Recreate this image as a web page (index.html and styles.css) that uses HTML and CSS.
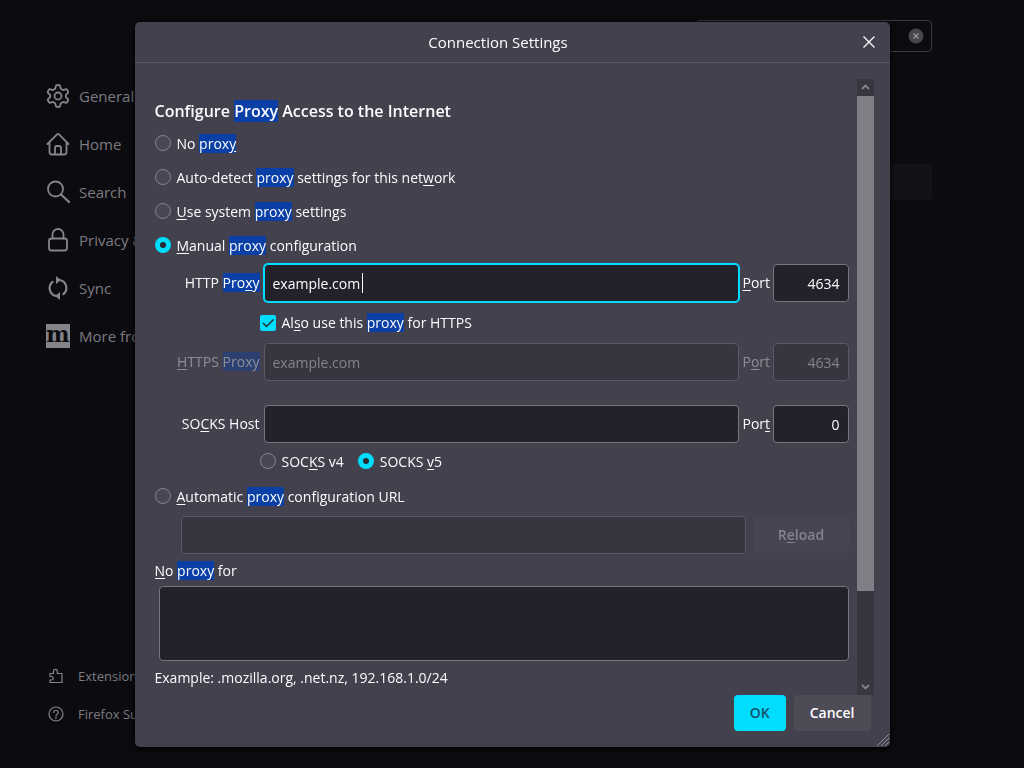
FILE: index.html
```html
<!DOCTYPE html>
<html lang="en">
<head>
  <meta charset="UTF-8">
  <meta name="viewport" content="width=device-width, initial-scale=1.0">
  <title>Connection Settings</title>
  <link rel="stylesheet" href="styles.css">
</head>
<body>

  <!-- Settings page behind the dialog -->
  <div class="page">
    <nav class="sidebar">
      <ul class="categories">
        <li><a href="#general">
          <svg class="icon" viewBox="0 0 24 24"><path d="M10 1.500q2-1 4 0l.8 3.300 2.200 1.300 3.300-1q1.800 1.300 2 3.500l-2.500 2.300v2.200l2.500 2.300q-.2 2.200-2 3.500l-3.300-1-2.200 1.300-.8 3.300q-2 1-4 0l-.8-3.300L7 17.900l-3.300 1q-1.800-1.300-2-3.500l2.500-2.300v-2.200L1.700 8.600q.2-2.200 2-3.500l3.300 1 2.200-1.300z"/><circle cx="12" cy="12" r="3.500"/></svg>
          General</a></li>
        <li><a href="#home">
          <svg class="icon" viewBox="0 0 24 24"><path d="M1.500 12 11 2.400q1-1 2 0L22.500 12M3.500 10.500V20q0 2.500 2.500 2.500h12q2.500 0 2.500-2.500v-9.500M9 22v-6q0-2 2-2h2q2 0 2 2v6"/></svg>
          Home</a></li>
        <li><a href="#search">
          <svg class="icon" viewBox="0 0 24 24"><circle cx="9.500" cy="9" r="7.500"/><path d="m15 14.500 8 7.500" stroke-width="2.200"/></svg>
          Search</a></li>
        <li><a href="#privacy">
          <svg class="icon" viewBox="0 0 24 24"><rect x="3" y="10.500" width="18" height="12" rx="2.500"/><path d="M6.500 10.500V6.500a5.500 5.500 0 0 1 11 0v4"/></svg>
          Privacy &amp; Security</a></li>
        <li><a href="#sync">
          <svg class="icon" viewBox="0 0 24 24"><path d="M14 4a8.200 8.200 0 0 1 3.500 14.200M10 20A8.200 8.200 0 0 1 6.500 5.800" stroke-width="2.200"/><path class="solid" d="M10 0v8l5-4zM14 24v-8l-5 4z"/></svg>
          Sync</a></li>
        <li><a href="#more">
          <span class="mozilla">m</span>
          More from Mozilla</a></li>
      </ul>
      <ul class="links">
        <li><a href="#extensions">
          <svg class="icon small" viewBox="0 0 16 16"><path d="M2 5.500h3.500V3.200a1.900 1.900 0 0 1 3.800 0v2.300H14v9H2V12h1.500a1.700 1.700 0 0 0 0-3.500H2z"/></svg>
          Extensions &amp; Themes</a></li>
        <li><a href="#support">
          <svg class="icon small" viewBox="0 0 16 16"><circle cx="8" cy="8" r="7"/><path d="M5.800 6.500a2.200 2.200 0 1 1 3.400 1.800Q8 9 8 10M8 11.300v1.200"/></svg>
          Firefox Support</a></li>
      </ul>
    </nav>
    <main class="content">
      <div class="searchbox">
        <button class="clear" aria-label="Clear search">
          <svg viewBox="0 0 16 16"><circle cx="8" cy="8" r="7.500"/><path d="m5.500 5.500 5 5m0-5-5 5"/></svg>
        </button>
      </div>
      <button class="page-button" aria-label="Settings"></button>
    </main>
  </div>

  <!-- Connection dialog -->
  <div class="overlay">
    <form class="dialog" role="dialog" aria-labelledby="dialog-title">
      <header class="titlebar">
        <h1 id="dialog-title">Connection Settings</h1>
        <button type="button" class="close" aria-label="Close">
          <svg viewBox="0 0 12 12"><path d="m.5.5 11 11m0-11-11 11"/></svg>
        </button>
      </header>

      <div class="dialog-body">
        <div class="settings">
          <h2>Configure <mark>Proxy</mark> Access to the Internet</h2>
          <label class="option"><input type="radio" name="mode"><span>No <mark>prox<u>y</u></mark></span></label>
          <label class="option"><input type="radio" name="mode"><span>Auto-detect <mark>proxy</mark> settings for this net<u>w</u>ork</span></label>
          <label class="option"><input type="radio" name="mode"><span><u>U</u>se system <mark>proxy</mark> settings</span></label>
          <label class="option"><input type="radio" name="mode" checked><span><u>M</u>anual <mark>proxy</mark> configuration</span></label>

          <div class="proxy-grid">
            <label class="host-label" for="http">HTTP <mark>Pro<u>x</u>y</mark></label>
            <div class="editing">
              <input class="field" type="text" id="http" value="example.com" autofocus>
              <span class="caret"></span>
            </div>
            <label for="http-port"><u>P</u>ort</label>
            <input class="field port" type="text" id="http-port" value="4634">

            <label class="option share"><input type="checkbox" checked><span>Al<u>s</u>o use this <mark>proxy</mark> for HTTPS</span></label>

            <label class="host-label disabled" for="https"><u>H</u>TTPS <mark>Proxy</mark></label>
            <input class="field" type="text" id="https" value="example.com" disabled>
            <label class="disabled" for="https-port">P<u>o</u>rt</label>
            <input class="field port" type="text" id="https-port" value="4634" disabled>

            <label class="host-label socks" for="socks">SO<u>C</u>KS Host</label>
            <input class="field socks" type="text" id="socks">
            <label class="socks" for="socks-port">Por<u>t</u></label>
            <input class="field port socks" type="text" id="socks-port" value="0">

            <div class="versions">
              <label class="option"><input type="radio" name="socks"><span>SOC<u>K</u>S v4</span></label>
              <label class="option"><input type="radio" name="socks" checked><span>SOCKS <u>v</u>5</span></label>
            </div>
          </div>

          <label class="option"><input type="radio" name="mode"><span><u>A</u>utomatic <mark>proxy</mark> configuration URL</span></label>
          <div class="url-row">
            <input class="field" type="text" aria-label="Automatic proxy configuration URL" disabled>
            <button type="button" class="button" disabled>R<u>e</u>load</button>
          </div>

          <label class="bypass-label" for="bypass"><u>N</u>o <mark>proxy</mark> for</label>
          <textarea class="field bypass" id="bypass"></textarea>
          <p class="example">Example: .mozilla.org, .net.nz, 192.168.1.0/24</p>
        </div>

        <div class="scrollbar" aria-hidden="true">
          <svg class="arrow" viewBox="0 0 17 17"><path d="m5 10 3.500-3.500L12 10"/></svg>
          <div class="track"><div class="thumb"></div></div>
          <svg class="arrow" viewBox="0 0 17 17"><path d="M5 7l3.500 3.500L12 7"/></svg>
        </div>
      </div>

      <footer class="actions">
        <button type="button" class="button primary">OK</button>
        <button type="button" class="button">Cancel</button>
      </footer>
      <svg class="resizer" viewBox="0 0 14 14"><path d="M1 13 13 1M5 13l8-8M9 13l4-4"/></svg>
    </form>
  </div>

</body>
</html>
```
FILE: styles.css
```css
* {
  margin: 0;
  padding: 0;
  box-sizing: border-box;
}

body {
  font-family: "Open Sans", "Noto Sans", sans-serif;
  font-size: 14px;
  line-height: 20px;
  background-color: #0c0b10;
  color: #fbfbfe;
  overflow: hidden;
}

button,
input,
textarea {
  font: inherit;
  color: inherit;
}

button {
  border: none;
}

/* Page behind */
.page {
  display: flex;
  height: 100vh;
}

.sidebar {
  display: flex;
  flex-direction: column;
  justify-content: space-between;
  width: 240px;
  padding: 72px 0 35px 46px;
}

.sidebar ul {
  list-style: none;
}

.sidebar a {
  display: flex;
  align-items: center;
  gap: 9px;
  height: 48px;
  color: #7c7b80;
  font-size: 15px;
  text-decoration: none;
  white-space: nowrap;
}

.sidebar .links a {
  height: 38px;
  gap: 14px;
  padding-left: 2px;
  font-size: 13px;
}

.icon {
  width: 24px;
  height: 24px;
  fill: none;
  stroke: #858489;
  stroke-width: 1.8;
  stroke-linejoin: round;
  stroke-linecap: round;
}

.icon .solid {
  fill: #858489;
  stroke: none;
}

.icon.small {
  width: 16px;
  height: 16px;
  stroke-width: 1.2;
}

.mozilla {
  width: 24px;
  height: 24px;
  background-color: #858489;
  color: #0c0b10;
  font-family: "DejaVu Serif", serif;
  font-size: 22px;
  font-weight: bold;
  line-height: 20px;
  display: flex;
  justify-content: center;
}

.content {
  flex: 1;
  display: flex;
  flex-direction: column;
  align-items: flex-end;
  padding: 20px 92px;
}

.searchbox {
  display: flex;
  align-items: center;
  justify-content: flex-end;
  width: 236px;
  height: 32px;
  padding-right: 7px;
  border: 1px solid #3c3b40;
  border-radius: 4px;
}

.clear {
  width: 16px;
  height: 16px;
  background: none;
}

.clear svg {
  display: block;
  fill: #47464a;
  stroke: #9a999e;
  stroke-width: 1.2;
}

.clear circle {
  stroke: none;
}

.page-button {
  width: 140px;
  height: 36px;
  margin-top: 112px;
  background-color: #131218;
  border-radius: 4px;
}

/* Dialog */
.overlay {
  position: fixed;
  inset: 0;
  display: flex;
  justify-content: center;
  padding: 22px 16px 21px;
}

.dialog {
  position: relative;
  display: flex;
  flex-direction: column;
  width: 100%;
  max-width: 755px;
  background-color: #42414d;
  border-radius: 5px;
  box-shadow: 0 2px 6px #000;
}

.titlebar {
  display: flex;
  align-items: center;
  height: 41px;
  padding: 0 14px 0 0;
  border-bottom: 1px solid #5b5a65;
}

.titlebar h1 {
  flex: 1;
  font-size: 15px;
  font-weight: normal;
  text-align: center;
}

.close {
  width: 14px;
  height: 14px;
  padding: 1px;
  background: none;
}

.close svg {
  display: block;
  width: 12px;
  height: 12px;
  fill: none;
  stroke: #fbfbfe;
  stroke-width: 1.3;
}

.dialog-body {
  display: flex;
  gap: 8px;
  flex: 1;
  min-height: 0;
  padding: 16px 16px 0 20px;
}

.settings {
  flex: 1;
  min-width: 0;
  overflow: hidden;
}

h2 {
  padding: 22px 0 5px;
  font-size: 16px;
  font-weight: 600;
}

mark {
  background-color: #0a3fa5;
  color: inherit;
}

u {
  text-underline-offset: 2px;
}

.option {
  display: flex;
  align-items: center;
  gap: 6px;
  height: 34px;
}

.option span {
  padding-top: 1px;
}

input[type="radio"],
input[type="checkbox"] {
  appearance: none;
  width: 16px;
  height: 16px;
  background-color: #484753;
  border: 1px solid #85848c;
  border-radius: 50%;
}

input[type="radio"]:checked {
  background-color: #2b2a33;
  border: 5px solid #00ddff;
}

input[type="checkbox"] {
  border-radius: 2px;
}

input[type="checkbox"]:checked {
  border: none;
  background: #00ddff url("data:image/svg+xml,%3Csvg xmlns='http://www.w3.org/2000/svg' viewBox='0 0 16 16'%3E%3Cpath d='m3 8 3.500 3.500 7-7' fill='none' stroke='%232b2a33' stroke-width='1.500'/%3E%3C/svg%3E");
}

.proxy-grid {
  display: grid;
  grid-template-columns: 105px 1fr 26px 76px;
  column-gap: 4px;
  align-items: center;
  padding-top: 2px;
}

.host-label {
  text-align: right;
  white-space: nowrap;
}

.field {
  display: block;
  width: 100%;
  min-width: 0;
  height: 38px;
  padding: 0 8px;
  background-color: #23222b;
  border: 1px solid #76757e;
  border-radius: 4px;
  outline: none;
}

.editing {
  position: relative;
}

.editing .field {
  border-color: #00ddff;
  box-shadow: 0 0 0 1px #00ddff;
  caret-color: transparent;
}

.caret {
  position: absolute;
  top: 9px;
  left: 98px;
  width: 1px;
  height: 20px;
  background-color: #fbfbfe;
}

.field:disabled {
  background-color: #363540;
  border-color: #5a5963;
  color: #85848c;
}

.port {
  text-align: right;
}

.disabled {
  opacity: 0.4;
}

.share {
  grid-column: 1 / -1;
  height: 41px;
  padding-left: 105px;
}

.socks {
  margin-top: 24px;
}

.versions {
  grid-column: 1 / -1;
  display: flex;
  align-items: center;
  gap: 14px;
  height: 36px;
  padding-left: 105px;
}

.url-row {
  display: flex;
  gap: 8px;
  padding: 3px 0 0 26px;
}

.url-row .field {
  flex: 1;
}

.button {
  height: 36px;
  padding: 0 16px;
  background-color: #4c4b56;
  border-radius: 4px;
  font-weight: 600;
}

.url-row .button {
  width: 95px;
  margin-top: 1px;
}

.button:disabled {
  background-color: #464551;
  color: #85848c;
}

.bypass-label {
  display: block;
  padding: 7px 0 5px;
}

.bypass {
  width: calc(100% - 4px);
  height: 75px;
  margin-left: 4px;
  resize: none;
}

.example {
  padding-top: 7px;
}

/* Scrollbar */
.scrollbar {
  display: flex;
  flex-direction: column;
  width: 17px;
  background-color: #363540;
}

.arrow {
  width: 17px;
  height: 17px;
  fill: none;
  stroke: #85848c;
  stroke-width: 1.8;
}

.track {
  flex: 1;
}

.thumb {
  height: 85%;
  background-color: #807f86;
}

.actions {
  display: flex;
  justify-content: flex-end;
  gap: 8px;
  padding: 0 19px 16px;
}

.primary {
  background-color: #00ddff;
  color: #14506b;
}

.resizer {
  position: absolute;
  right: 0;
  bottom: 0;
  width: 14px;
  height: 14px;
  stroke: #8f8e96;
}
```
